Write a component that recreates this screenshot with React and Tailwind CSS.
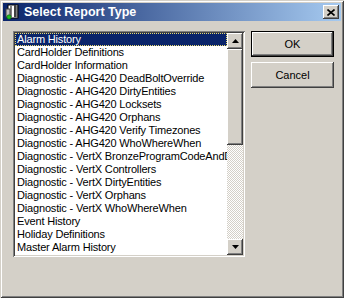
import React from "react";

const items = [
  "Alarm History",
  "CardHolder Definitions",
  "CardHolder Information",
  "Diagnostic - AHG420 DeadBoltOverride",
  "Diagnostic - AHG420 DirtyEntities",
  "Diagnostic - AHG420 Locksets",
  "Diagnostic - AHG420 Orphans",
  "Diagnostic - AHG420 Verify Timezones",
  "Diagnostic - AHG420 WhoWhereWhen",
  "Diagnostic - VertX BronzeProgramCodeAndDoor",
  "Diagnostic - VertX Controllers",
  "Diagnostic - VertX DirtyEntities",
  "Diagnostic - VertX Orphans",
  "Diagnostic - VertX WhoWhereWhen",
  "Event History",
  "Holiday Definitions",
  "Master Alarm History",
];

const raised =
  "bg-[#d4d0c8] shadow-[inset_-1px_-1px_#404040,inset_1px_1px_#ffffff,inset_-2px_-2px_#808080]";

function Arrow({ down }) {
  return (
    <svg width="7" height="4" viewBox="0 0 7 4">
      {down ? (
        <polygon points="0,0 7,0 3.5,4" fill="#000" />
      ) : (
        <polygon points="0,4 7,4 3.5,0" fill="#000" />
      )}
    </svg>
  );
}

function TitleIcon() {
  return (
    <svg width="16" height="16" viewBox="0 0 16 16">
      <rect x="3" y="1" width="10" height="13" fill="#fff" stroke="#000" />
      <rect x="5" y="1" width="2" height="12" fill="#808080" />
      <rect x="9" y="1" width="2" height="12" fill="#404040" />
      <line x1="12" y1="2" x2="12" y2="13" stroke="#000" />
      <rect x="1" y="5" width="4" height="8" fill="#c0c0c0" stroke="#404040" />
      <circle cx="4" cy="13" r="2.2" fill="#20c020" stroke="#106010" strokeWidth="0.6" />
    </svg>
  );
}

export default function App() {
  return (
    <div
      className="w-[344px] h-[298px] p-[3px] flex flex-col bg-[#d4d0c8] shadow-[inset_1px_1px_#d4d0c8,inset_-1px_-1px_#404040,inset_2px_2px_#ffffff,inset_-2px_-2px_#808080]"
      style={{ fontFamily: '"Liberation Sans", Arial, sans-serif' }}
    >
      {/* title bar */}
      <div className="h-[18px] flex items-center pl-[2px] pr-[2px] bg-[linear-gradient(to_right,#0a246a,#a6caf0)]">
        <TitleIcon />
        <span className="ml-[3px] text-white font-bold text-[12.5px] leading-none">
          Select Report Type
        </span>
        <div className={`ml-auto w-[16px] h-[14px] flex items-center justify-center ${raised}`}>
          <svg width="8" height="7" viewBox="0 0 8 7">
            <path d="M0.5 0.5 L7.5 6.5 M7.5 0.5 L0.5 6.5" stroke="#000" strokeWidth="1.6" />
          </svg>
        </div>
      </div>

      {/* body */}
      <div className="flex pt-[10px] pl-[10px]">
        <div className="w-[232px] h-[226px] p-[2px] flex bg-white shadow-[inset_1px_1px_#808080,inset_-1px_-1px_#ffffff,inset_2px_2px_#404040,inset_-2px_-2px_#d4d0c8]">
          <div className="flex-1 overflow-hidden text-[11px] tracking-[-0.17px] text-black">
            {items.map((it, i) => (
              <div
                key={it}
                className={
                  "h-[13px] leading-[13px] pl-[2px] whitespace-nowrap " +
                  (i === 0
                    ? "bg-[#0a246a] text-white outline-1 outline-dotted outline-[#e8d870] -outline-offset-1"
                    : "")
                }
              >
                {it}
              </div>
            ))}
          </div>
          <div className="w-[16px] flex flex-col">
            <div className={`h-[16px] flex items-center justify-center ${raised}`}>
              <Arrow />
            </div>
            <div className="flex-1 flex flex-col bg-[conic-gradient(#ffffff_25%,#d4d0c8_0_50%,#ffffff_0_75%,#d4d0c8_0)] bg-[length:2px_2px]">
              <div className={`h-[96px] ${raised}`} />
            </div>
            <div className={`h-[16px] flex items-center justify-center ${raised}`}>
              <Arrow down />
            </div>
          </div>
        </div>

        <div className="ml-[6px] w-[83px] flex flex-col gap-[5px] text-[11px]">
          <div className="h-[26px] border border-black">
            <div className={`h-full flex items-center justify-center ${raised}`}>OK</div>
          </div>
          <div className={`h-[26px] flex items-center justify-center ${raised}`}>Cancel</div>
        </div>
      </div>
    </div>
  );
}
